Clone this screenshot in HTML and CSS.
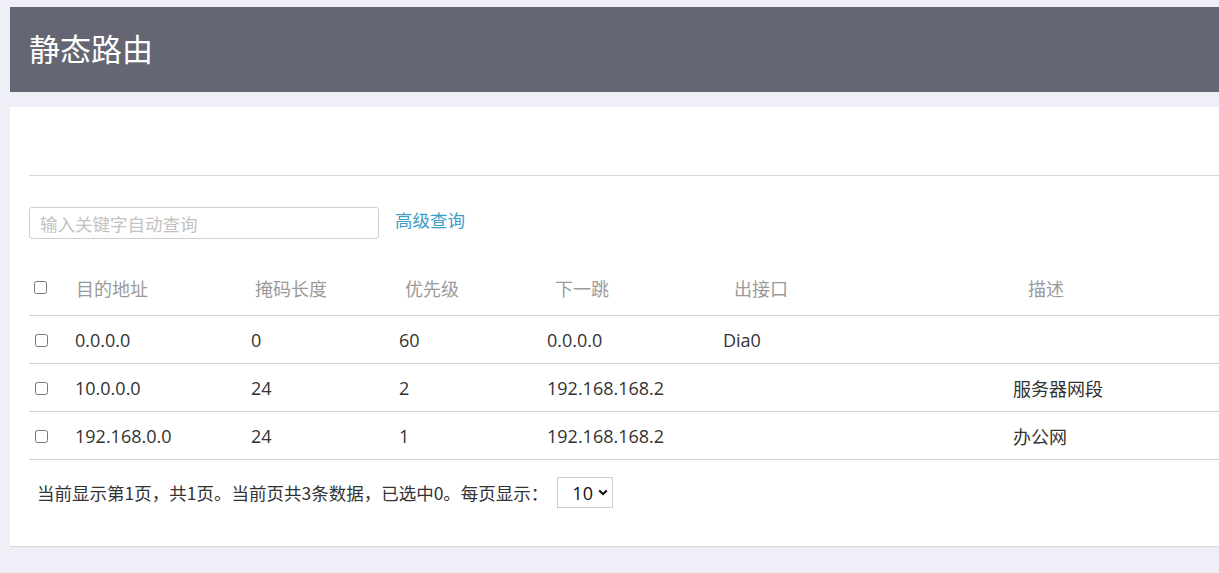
FILE: index.html
```html
<!DOCTYPE html>
<html lang="zh-CN">
<head>
<meta charset="utf-8">
<title>静态路由</title>
<link rel="stylesheet" href="styles.css">
</head>
<body>
<div class="page">
  <header class="topbar">
    <h1 class="title">静态路由</h1>
  </header>
  <section class="panel">
    <div class="toolbar-space"></div>
    <div class="search-row">
      <input class="search" type="text" placeholder="输入关键字自动查询">
      <a class="adv-link" href="#">高级查询</a>
    </div>
    <div class="table">
      <div class="thead">
        <div class="cell cb"><input type="checkbox"></div>
        <div class="cell">目的地址</div>
        <div class="cell">掩码长度</div>
        <div class="cell">优先级</div>
        <div class="cell">下一跳</div>
        <div class="cell">出接口</div>
        <div class="cell">描述</div>
      </div>
      <div class="trow">
        <div class="cell cb"><input type="checkbox"></div>
        <div class="cell">0.0.0.0</div>
        <div class="cell">0</div>
        <div class="cell">60</div>
        <div class="cell">0.0.0.0</div>
        <div class="cell">Dia0</div>
        <div class="cell"></div>
      </div>
      <div class="trow">
        <div class="cell cb"><input type="checkbox"></div>
        <div class="cell">10.0.0.0</div>
        <div class="cell">24</div>
        <div class="cell">2</div>
        <div class="cell">192.168.168.2</div>
        <div class="cell"></div>
        <div class="cell">服务器网段</div>
      </div>
      <div class="trow">
        <div class="cell cb"><input type="checkbox"></div>
        <div class="cell">192.168.0.0</div>
        <div class="cell">24</div>
        <div class="cell">1</div>
        <div class="cell">192.168.168.2</div>
        <div class="cell"></div>
        <div class="cell">办公网</div>
      </div>
    </div>
    <div class="pager">
      <span class="pager-text">当前显示第1页，共1页。当前页共3条数据，已选中0。每页显示：</span>
      <div class="page-size">
        <span>10</span>
        <svg class="chev" width="10" height="7" viewBox="0 0 10 7"><path d="M1.2 1.4 L5 5 L8.8 1.4" fill="none" stroke="#111" stroke-width="2"/></svg>
      </div>
    </div>
  </section>
</div>
</body>
</html>
```

FILE: styles.css
```css
html, body {
  margin: 0;
  padding: 0;
  overflow: hidden;
}
body {
  background: #eeeff7;
  font-family: "Open Sans", "Noto Sans CJK SC", sans-serif;
  color: #333;
}
.page {
  width: 1260px;
  padding: 7px 0 0 10px;
}
.topbar {
  height: 85px;
  background: #646673;
  display: flex;
  align-items: center;
  padding-left: 19px;
}
.title {
  margin: 0;
  padding-bottom: 3px;
  font-family: "Noto Sans CJK SC", sans-serif;
  font-weight: 400;
  font-size: 31px;
  line-height: 38px;
  color: #fff;
}
.panel {
  margin-top: 15px;
  background: #fff;
  height: 439px;
  border-bottom: 1px solid #d8d8d8;
  padding-left: 19px;
}
.toolbar-space {
  height: 68px;
  border-bottom: 1px solid #d6d6d6;
}
.search-row {
  display: flex;
  align-items: center;
  margin-top: 31px;
  height: 32px;
}
.search {
  box-sizing: border-box;
  width: 350px;
  height: 32px;
  border: 1px solid #cfcfcf;
  border-radius: 3px;
  padding: 0 10px;
  font-family: "Noto Sans CJK SC", sans-serif;
  font-size: 17.5px;
  color: #333;
  outline: none;
}
.search::placeholder {
  color: #c2c2c2;
}
.adv-link {
  margin-left: 16px;
  font-family: "Noto Sans CJK SC", sans-serif;
  font-size: 17.5px;
  line-height: 24px;
  color: #3d9dc6;
  text-decoration: none;
  margin-top: -6px;
}
.table {
  margin-top: 29px;
}
.thead, .trow {
  display: grid;
  align-items: center;
  border-bottom: 1px solid #d3d3d3;
  font-size: 18px;
}
.thead {
  height: 47px;
  grid-template-columns: 47px 179px 150px 150px 179px 294px 1fr;
  color: #9a9a9a;
  font-family: "Noto Sans CJK SC", sans-serif;
}
.thead .cell {
  padding-bottom: 8px;
}
.thead .cb {
  padding-left: 5px;
}
.trow {
  height: 47px;
  grid-template-columns: 46px 176px 148px 148px 176px 290px 1fr;
  color: #333;
}
.trow .cb {
  padding-left: 6px;
  padding-top: 1px;
}
.cell {
  line-height: 22px;
  white-space: nowrap;
}
.cb {
  display: flex;
  align-items: center;
}
.cb input {
  margin: 0;
  width: 13px;
  height: 13px;
}
.trow .cell:nth-child(7) {
  font-family: "Noto Sans CJK SC", sans-serif;
}
.pager {
  display: flex;
  align-items: center;
  padding: 17px 0 0 8px;
}
.pager-text {
  font-family: "Noto Sans CJK SC", sans-serif;
  font-size: 17.5px;
  color: #333;
}
.page-size {
  box-sizing: border-box;
  margin-left: 9px;
  width: 56px;
  height: 31px;
  border: 1px solid #cccccc;
  display: flex;
  align-items: center;
  padding-left: 14px;
  gap: 5px;
  font-size: 18px;
  color: #111;
}
.chev {
  display: block;
}
```
